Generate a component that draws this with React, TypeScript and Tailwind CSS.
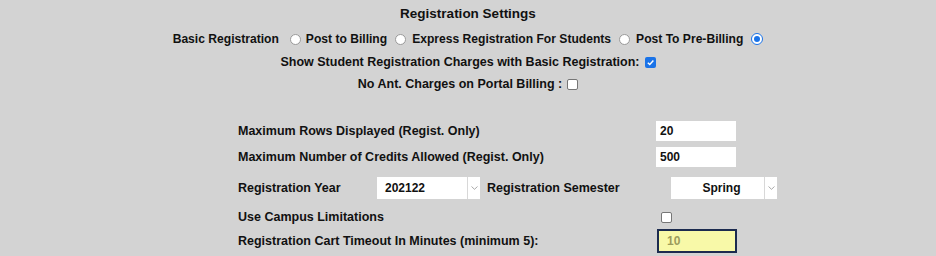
import React from "react";

const Radio = ({ checked = false }: { checked?: boolean }) =>
  checked ? (
    <span className="inline-flex h-[12px] w-[12px] items-center justify-center rounded-full border-[1.5px] border-[#1a73e8] bg-white">
      <span className="h-[6px] w-[6px] rounded-full bg-[#1a73e8]" />
    </span>
  ) : (
    <span className="inline-block h-[11px] w-[11px] rounded-full border border-[#9a9a9a] bg-white" />
  );

const Check = ({ checked = false }: { checked?: boolean }) =>
  checked ? (
    <span className="inline-flex h-[11px] w-[11px] items-center justify-center rounded-[2px] bg-[#1a73e8]">
      <svg width="9" height="9" viewBox="0 0 10 10">
        <path d="M2 5.2 L4.2 7.3 L8.2 2.8" stroke="white" strokeWidth="1.6" fill="none" />
      </svg>
    </span>
  ) : (
    <span className="inline-block h-[11px] w-[11px] rounded-[2px] border border-[#767676] bg-white" />
  );

const Select = ({ value, center = false, w }: { value: string; center?: boolean; w: string }) => (
  <div className={`flex h-[22px] ${w} bg-white`}>
    <div className={`flex flex-1 items-center pl-[8px] text-[12px] ${center ? "justify-center" : ""}`}>{value}</div>
    <div className="flex w-[13px] items-center justify-center border-l border-[#d8d8d8]">
      <svg width="7" height="4" viewBox="0 0 7 4">
        <path d="M0.5 0.5 L3.5 3.3 L6.5 0.5" stroke="#a0a0a0" strokeWidth="0.9" fill="none" />
      </svg>
    </div>
  </div>
);

export default function App() {
  return (
    <div
      className="h-[256px] w-full bg-[#d3d3d3] text-[#111] font-bold"
      style={{ fontFamily: '"Liberation Sans", Arial, sans-serif' }}
    >
      <div className="flex h-[28px] items-center justify-center text-[13.5px]">Registration Settings</div>
      <div className="flex h-[22px] items-center justify-center text-[12.1px]">
        <span>Basic Registration</span>
        <span className="ml-[11px] mr-[5px] flex"><Radio /></span>
        <span>Post to Billing</span>
        <span className="ml-[8px] mr-[6px] flex"><Radio /></span>
        <span>Express Registration For Students</span>
        <span className="ml-[8px] mr-[6px] flex"><Radio /></span>
        <span>Post To Pre-Billing</span>
        <span className="ml-[8px] flex"><Radio checked /></span>
      </div>
      <div className="flex h-[24px] items-center justify-center text-[12.5px]">
        <span>Show Student Registration Charges with Basic Registration:</span>
        <span className="ml-[5px] flex"><Check checked /></span>
      </div>
      <div className="flex h-[20px] items-center justify-center text-[12.5px]">
        <span>No Ant. Charges on Portal Billing :</span>
        <span className="ml-[5px] flex"><Check /></span>
      </div>
      <div className="h-[24px]" />
      <div className="pl-[238px] text-[12.5px]">
        <div className="flex h-[26px] items-center">
          <span className="w-[418px]">Maximum Rows Displayed (Regist. Only)</span>
          <div className="flex h-[20px] w-[80px] items-center bg-white pl-[4px] text-[12px]">20</div>
        </div>
        <div className="flex h-[26px] items-center">
          <span className="w-[418px]">Maximum Number of Credits Allowed (Regist. Only)</span>
          <div className="flex h-[20px] w-[80px] items-center bg-white pl-[4px] text-[12px]">500</div>
        </div>
        <div className="flex h-[36px] items-center">
          <span className="w-[139px]">Registration Year</span>
          <Select value="202122" w="w-[103px]" />
          <span className="ml-[7px] w-[184px]">Registration Semester</span>
          <Select value="Spring" center w="w-[106px]" />
        </div>
        <div className="flex h-[22px] items-center">
          <span className="w-[423px]">Use Campus Limitations</span>
          <Check />
        </div>
        <div className="flex h-[26px] items-center">
          <span className="w-[419px]">Registration Cart Timeout In Minutes (minimum 5):</span>
          <div className="flex h-[24px] w-[80px] items-center border-2 border-[#1c2b4f] bg-[#f8f9a8] pl-[8px] text-[12px] text-[#9c9c5c]">10</div>
        </div>
      </div>
    </div>
  );
}
